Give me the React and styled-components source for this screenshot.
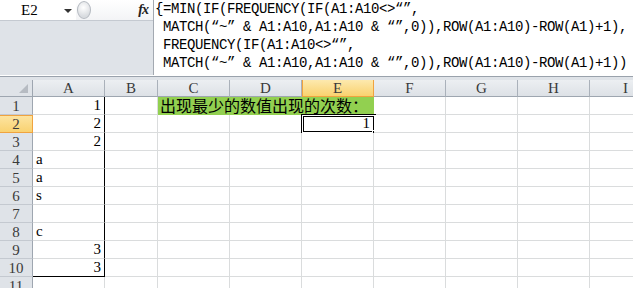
import React from "react";
import styled, { createGlobalStyle } from "styled-components";

const GlobalStyle = createGlobalStyle`
  html, body {
    margin: 0;
    padding: 0;
    background: #fff;
    overflow: hidden;
  }
  body {
    font-family: "Liberation Serif", "Noto Sans CJK SC", serif;
    color: #000;
  }
`;

// 수식 텍스트 (4줄)
const FORMULA = [
  "{=MIN(IF(FREQUENCY(IF(A1:A10<>\u201c\u201d,",
  " MATCH(\u201c~\u201d & A1:A10,A1:A10 & \u201c\u201d,0)),ROW(A1:A10)-ROW(A1)+1),",
  " FREQUENCY(IF(A1:A10<>\u201c\u201d,",
  " MATCH(\u201c~\u201d & A1:A10,A1:A10 & \u201c\u201d,0)),ROW(A1:A10)-ROW(A1)+1))",
];

const COLUMNS = ["A", "B", "C", "D", "E", "F", "G", "H", "I"];
const COLUMN_A = ["1", "2", "2", "a", "a", "s", "", "c", "3", "3", ""];

const App = () => {
  const rows = Array.from({ length: 11 }, (_, i) => i + 1);

  return (
    <Sheet>
      <GlobalStyle />
      <FormulaBar>
        <LeftPanel>
          <NameRow>
            <NameBox>
              E2
              <DropArrow />
            </NameBox>
            <Splitter />
            <FxButton>fx</FxButton>
          </NameRow>
        </LeftPanel>
        <FormulaInput>{FORMULA.join("\n")}</FormulaInput>
      </FormulaBar>
      <Gap />

      <Grid>
        <Corner>
          <CornerMark />
        </Corner>
        {COLUMNS.map((c) => (
          <ColHeader key={c} $active={c === "E"}>
            {c}
          </ColHeader>
        ))}

        {rows.map((r) => {
          const aVal = COLUMN_A[r - 1];
          const isNum = /^\d+$/.test(aVal);
          return (
            <React.Fragment key={r}>
              <RowHeader $active={r === 2}>{r}</RowHeader>
              <Cell
                $align={isNum ? "right" : "left"}
                $edgeRight={r <= 10}
                $edgeBottom={r === 10}
              >
                {aVal}
              </Cell>
              <Cell />
              {r === 1 ? (
                <Cell $span={3} $fill="#92d050">
                  <CjkText>出现最少的数值出现的次数：</CjkText>
                </Cell>
              ) : (
                <>
                  <Cell />
                  <Cell />
                  {r === 2 ? (
                    <Cell $align="right">
                      1
                      <Selection>
                        <FillHandle />
                      </Selection>
                    </Cell>
                  ) : (
                    <Cell />
                  )}
                </>
              )}
              <Cell />
              <Cell />
              <Cell />
              <Cell />
            </React.Fragment>
          );
        })}
      </Grid>
    </Sheet>
  );
};

//////////////////////////////////////// Styled-Components
const Sheet = styled.div`
  width: 633px;
  height: 288px;
  overflow: hidden;
  background: #fff;
`;

const FormulaBar = styled.div`
  display: flex;
  height: 75px;
  background: #dfe3e8;
  border-bottom: 1px solid #fff;
`;

const LeftPanel = styled.div`
  width: 153px;
  display: flex;
  flex-direction: column;
`;

const NameRow = styled.div`
  display: flex;
  align-items: center;
  height: 20px;
  background: linear-gradient(#ffffff, #f3f4f6);
  border-bottom: 1px solid #c5cad1;
`;

const NameBox = styled.div`
  position: relative;
  width: 76px;
  height: 20px;
  box-sizing: border-box;
  padding-left: 21px;
  font-size: 15px;
  line-height: 20px;
  background: #fff;
`;

const DropArrow = styled.span`
  position: absolute;
  left: 64px;
  top: 9px;
  width: 0;
  height: 0;
  border-left: 4px solid transparent;
  border-right: 4px solid transparent;
  border-top: 4px solid #333;
`;

const Splitter = styled.div`
  width: 12px;
  height: 16px;
  margin-left: 1px;
  border-radius: 50%;
  border: 1px solid #b4b9c0;
  background: radial-gradient(circle at 45% 35%, #ffffff, #d9dce0 70%);
`;

const FxButton = styled.div`
  margin-left: auto;
  margin-right: 5px;
  font-style: italic;
  font-weight: bold;
  font-size: 14px;
  letter-spacing: -1px;
  color: #222;
`;

const FormulaInput = styled.div`
  flex: 1;
  background: #fff;
  border-left: 1px solid #a3a9b1;
  padding-left: 1px;
  font-family: "Liberation Mono", monospace;
  font-size: 14px;
  letter-spacing: -0.4px;
  line-height: 18px;
  white-space: pre;
  overflow: hidden;
`;

const Gap = styled.div`
  height: 3px;
  background: #dfe3e8;
  border-top: 1px solid #9aa2ac;
`;

const Grid = styled.div`
  display: grid;
  grid-template-columns: 33px 72px 53px repeat(7, 72px);
  grid-template-rows: 17px;
  grid-auto-rows: 18px;
  font-size: 15px;
`;

const HeaderBase = styled.div`
  box-sizing: border-box;
  display: flex;
  align-items: center;
  justify-content: center;
  color: #3a3a3a;
  line-height: 16px;
`;

const Corner = styled(HeaderBase)`
  position: relative;
  background: #dfe3e8;
  border-right: 1px solid #9ea6b0;
  border-bottom: 1px solid #9ea6b0;
`;

const CornerMark = styled.span`
  position: absolute;
  right: 4px;
  bottom: 3px;
  width: 0;
  height: 0;
  border-left: 9px solid transparent;
  border-bottom: 9px solid #b6bbc2;
`;

const ColHeader = styled(HeaderBase)`
  background: ${(p) =>
    p.$active
      ? "linear-gradient(#fde9ae, #f9d26f)"
      : "linear-gradient(#eceff2, #dde1e6)"};
  border-right: 1px solid ${(p) => (p.$active ? "#f0a33f" : "#aab1ba")};
  border-bottom: 1px solid ${(p) => (p.$active ? "#f0a33f" : "#9ea6b0")};
  ${(p) => p.$active && "box-shadow: inset 1px 0 0 #f0a33f;"}
`;

const RowHeader = styled(HeaderBase)`
  background: ${(p) =>
    p.$active ? "linear-gradient(#fde5a3, #f9d271)" : "#dfe3e8"};
  border-right: 1px solid ${(p) => (p.$active ? "#f0a33f" : "#9ea6b0")};
  border-bottom: 1px solid ${(p) => (p.$active ? "#f0a33f" : "#c4c9d0")};
  ${(p) => p.$active && "box-shadow: inset 0 1px 0 #f0a33f;"}
`;

const Cell = styled.div`
  position: relative;
  box-sizing: border-box;
  grid-column: span ${(p) => p.$span || 1};
  padding: 0 3px;
  line-height: 17px;
  white-space: nowrap;
  text-align: ${(p) => p.$align || "left"};
  background: ${(p) => p.$fill || "#fff"};
  border-right: 1px solid
    ${(p) => (p.$edgeRight ? "#000" : p.$fill ? p.$fill : "#dadcdd")};
  border-bottom: 1px solid
    ${(p) => (p.$edgeBottom ? "#000" : p.$fill ? p.$fill : "#dadcdd")};
`;

const CjkText = styled.span`
  font-family: "Noto Sans CJK SC", sans-serif;
  font-size: 16px;
  line-height: 17px;
  margin-left: -1px;
`;

const Selection = styled.div`
  position: absolute;
  left: -1px;
  top: -1px;
  right: -3px;
  bottom: -2px;
  border: 1px solid #000;
  box-shadow: inset 0 0 0 1px #fff, inset 0 0 0 2px #000;
  pointer-events: none;
`;

const FillHandle = styled.span`
  position: absolute;
  right: -3px;
  bottom: -3px;
  width: 5px;
  height: 5px;
  background: #000;
  border: 1px solid #fff;
  border-right: none;
  border-bottom: none;
`;

export default App;
